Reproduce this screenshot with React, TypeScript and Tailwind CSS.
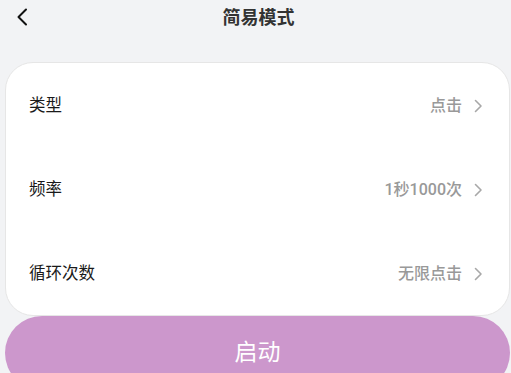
import React from 'react';

const FONT = '"Roboto", "Noto Sans CJK SC", sans-serif';

const rows = [
  { label: '类型', value: '点击' },
  { label: '频率', value: '1秒1000次' },
  { label: '循环次数', value: '无限点击' },
];

const ChevronRight = () => (
  <svg width="9" height="14" viewBox="0 0 9 14" fill="none">
    <path d="M1.5 1.5L7 7L1.5 12.5" stroke="#a8a8a8" strokeWidth="1.6" strokeLinecap="round" strokeLinejoin="round" />
  </svg>
);

const App: React.FC = () => {
  return (
    <div className="w-[511px] h-[373px] overflow-hidden bg-[#f2f3f5]" style={{ fontFamily: FONT }}>
      {/* 顶部导航 */}
      <div className="relative h-[35px] flex items-center justify-center">
        <button className="absolute left-[14px] top-[7px] p-0">
          <svg width="16" height="20" viewBox="0 0 16 20" fill="none">
            <path d="M12 2.5L4.5 10L12 17.5" stroke="#111" strokeWidth="2" strokeLinecap="round" strokeLinejoin="round" />
          </svg>
        </button>
        <span className="ml-[6px] text-[18px] font-bold text-[#333]">简易模式</span>
      </div>

      {/* 设置卡片 */}
      <div className="mt-[27px] ml-[5px] w-[505px] h-[254px] bg-white rounded-[28px] border border-[#e6e6e6] flex flex-col">
        {rows.map((row) => (
          <div key={row.label} className="flex-1 flex items-center justify-between pt-[2px] pl-[23px] pr-[26px]">
            <span className="text-[16.5px] text-[#1a1a1a]">{row.label}</span>
            <div className="flex items-center gap-[12px]">
              <span className="text-[16px] font-medium text-[#999]">{row.value}</span>
              <ChevronRight />
            </div>
          </div>
        ))}
      </div>

      {/* 启动按钮 */}
      <button className="ml-[5px] w-[505px] h-[74px] rounded-[40px] bg-[#cc97cc] flex items-center justify-center">
        <span className="text-[23px] text-white">启动</span>
      </button>
    </div>
  );
};

export default App;
